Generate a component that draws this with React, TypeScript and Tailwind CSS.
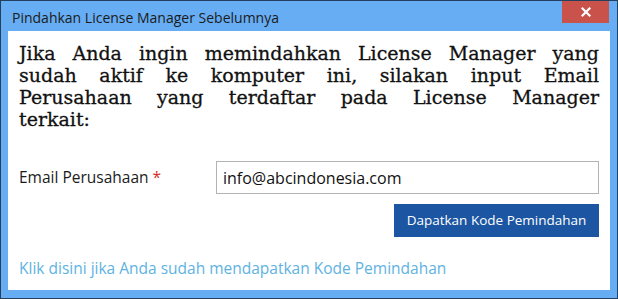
import React from 'react';

const lines = [
  'Jika Anda ingin memindahkan License Manager yang',
  'sudah aktif ke komputer ini, silakan input Email',
  'Perusahaan yang terdaftar pada License Manager',
];

export default function App() {
  return (
    <div className="w-[618px] h-[299px] flex flex-col border border-[#24405e] bg-[#66adf4] font-['Open_Sans',sans-serif]">
      {/* title bar */}
      <div className="h-[30px] flex items-start justify-between shrink-0">
        <div className="pl-[11px] pt-[6px] text-[14px] text-[#1b1b1b]">Pindahkan License Manager Sebelumnya</div>
        <button className="w-[47px] h-[22px] mr-[8px] bg-[#c9524b] flex items-center justify-center">
          <svg width="10" height="10" viewBox="0 0 10 10">
            <path d="M1.5 1.5 L8.5 8.5 M8.5 1.5 L1.5 8.5" stroke="#fff" strokeWidth="2.2" strokeLinecap="square" />
          </svg>
        </button>
      </div>

      {/* content */}
      <div className="flex-1 mx-[7px] mb-[8px] bg-white px-[11px] pt-[11px] flex flex-col">
        <div className="font-['DejaVu_Serif',serif] text-[19px] leading-[22px] text-[#111] [-webkit-text-stroke:0.3px_#111]">
          {lines.map((l) => (
            <div key={l} className="text-justify [text-align-last:justify]">{l}</div>
          ))}
          <div>terkait:</div>
        </div>

        <div className="mt-[31px] flex items-center">
          <label className="w-[197px] text-[15.5px] text-[#1b1b1b]">
            Email Perusahaan <span className="text-[#d7302b]">*</span>
          </label>
          <input
            defaultValue="info@abcindonesia.com"
            className="flex-1 h-[33px] border border-[#b3b3b3] px-[6px] text-[16px] text-[#111] outline-none"
          />
        </div>

        <div className="mt-[10px] flex justify-end">
          <button className="w-[205px] h-[33px] bg-[#1c55a1] text-white text-[13.5px]">Dapatkan Kode Pemindahan</button>
        </div>

        <a className="mt-[21px] text-[15.5px] leading-[20px] text-[#5eb3e2]">
          Klik disini jika Anda sudah mendapatkan Kode Pemindahan
        </a>
      </div>
    </div>
  );
}
